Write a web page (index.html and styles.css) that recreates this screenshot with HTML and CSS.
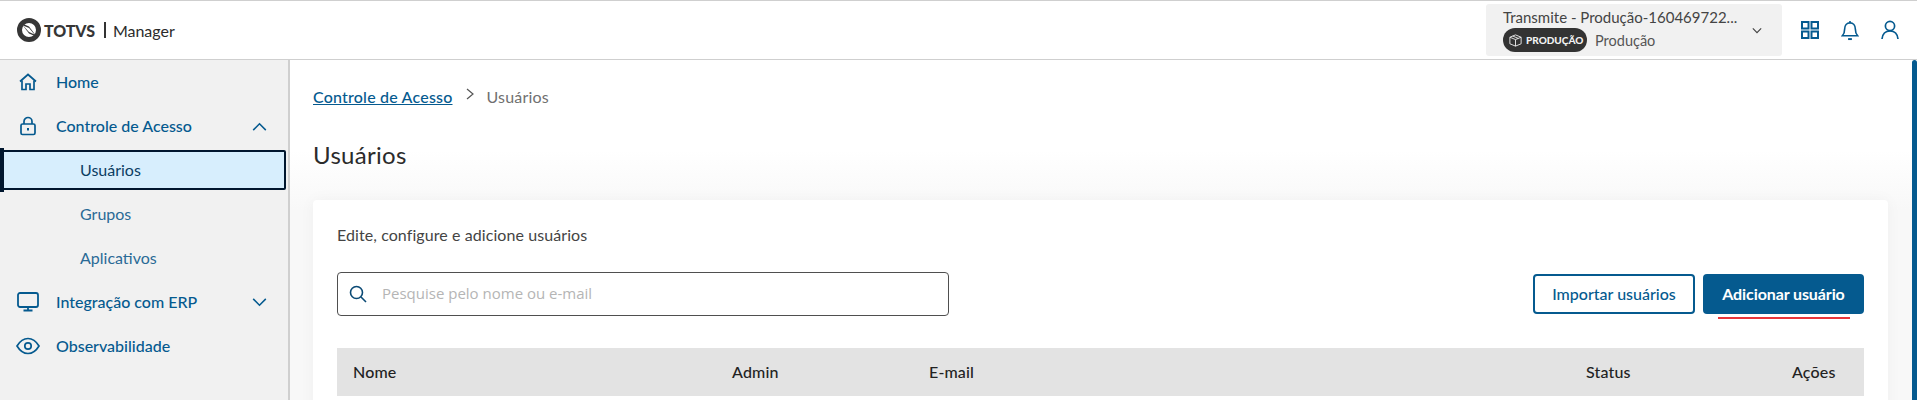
FILE: index.html
```html
<!DOCTYPE html>
<html lang="pt-BR">
<head>
<meta charset="utf-8">
<title>TOTVS Manager</title>
<link rel="stylesheet" href="styles.css">
</head>
<body>
<header class="topbar">
  <div class="brand">
    <svg class="brand-mark" viewBox="0 0 24 24" width="24" height="24"><circle cx="12" cy="12" r="9.5" fill="none" stroke="#363636" stroke-width="5"/><path d="M4 5 L12 8.5 L20 19 L12 15.5 Z" fill="#363636"/><path d="M6 7.5 L12 10 L17.5 16.5 L12 14 Z" fill="#fff"/></svg>
    <span class="brand-name">TOTVS</span>
    <span class="brand-sep"></span>
    <span class="brand-app">Manager</span>
  </div>
  <div class="topbar-right">
    <div class="env">
      <div class="env-text">
        <div class="env-title">Transmite - Produção-160469722...</div>
        <div class="env-sub">
          <span class="chip">
            <svg viewBox="0 0 16 16" width="15" height="15" fill="none" stroke="#e8e8e8" stroke-width="1"><path d="M8 2 L14 4.5 V11.5 L8 14 L2 11.5 V4.5 Z M2 4.5 L8 7 L14 4.5 M8 7 V14 M5 3.2 L11 5.8"/></svg>
            PRODUÇÃO
          </span>
          <span class="env-name">Produção</span>
        </div>
      </div>
      <svg class="env-chev" viewBox="0 0 12 8" width="10" height="7" fill="none" stroke="#444" stroke-width="1.4"><path d="M1 1.5 L6 6.5 L11 1.5"/></svg>
    </div>
    <div class="top-icons">
      <svg viewBox="0 0 18 18" width="18" height="18" fill="none" stroke="#055a8f" stroke-width="2"><rect x="1" y="1" width="6.5" height="6.5"/><rect x="10.5" y="1" width="6.5" height="6.5"/><rect x="1" y="10.5" width="6.5" height="6.5"/><rect x="10.5" y="10.5" width="6.5" height="6.5"/></svg>
      <svg viewBox="0 0 18 22" width="18" height="21" fill="none" stroke="#055a8f" stroke-width="1.7"><path d="M1 16.5 H17 C15 14.5 14.6 13 14.6 9.5 C14.6 5.8 12.2 3 9 3 C5.8 3 3.4 5.8 3.4 9.5 C3.4 13 3 14.5 1 16.5 Z"/><path d="M9 1 V3"/><path d="M7 20 H11" stroke-width="2"/></svg>
      <svg viewBox="0 0 18 20" width="18" height="20" fill="none" stroke="#055a8f" stroke-width="1.7"><circle cx="9" cy="6" r="4.6"/><path d="M1 19 C1.5 14 4.5 11 9 11 C13.5 11 16.5 14 17 19"/></svg>
    </div>
  </div>
</header>
<div class="shell">
  <nav class="sidebar">
    <a class="nav-item">
      <span class="nav-icon"><svg viewBox="0 0 20 20" width="20" height="20" fill="none" stroke="#055a8f" stroke-width="1.7"><path d="M2 9.5 L10 2.5 L18 9.5"/><path d="M4 8.5 V17.5 H8 V12 H12 V17.5 H16 V8.5"/></svg></span>
      <span class="nav-label">Home</span>
    </a>
    <a class="nav-item">
      <span class="nav-icon"><svg viewBox="0 0 20 20" width="20" height="20" fill="none" stroke="#055a8f" stroke-width="1.7"><rect x="3" y="8" width="14" height="10.5" rx="1.5"/><path d="M6 8 V5.5 C6 3 8 1.5 10 1.5 C12 1.5 14 3 14 5.5 V8"/><path d="M10 12 V14.5" stroke-width="2"/></svg></span>
      <span class="nav-label">Controle de Acesso</span>
      <svg class="nav-chev" viewBox="0 0 16 10" width="15" height="9" fill="none" stroke="#055a8f" stroke-width="1.7"><path d="M1 9 L8 2 L15 9"/></svg>
    </a>
    <a class="nav-sub nav-sub-active">Usuários</a>
    <a class="nav-sub">Grupos</a>
    <a class="nav-sub">Aplicativos</a>
    <a class="nav-item">
      <span class="nav-icon"><svg viewBox="0 0 22 20" width="22" height="20" fill="none" stroke="#055a8f" stroke-width="1.8"><rect x="1" y="1" width="20" height="14" rx="2"/><path d="M11 15 V18.5 M6.5 18.5 H15.5"/></svg></span>
      <span class="nav-label">Integração com ERP</span>
      <svg class="nav-chev" viewBox="0 0 16 10" width="15" height="9" fill="none" stroke="#055a8f" stroke-width="1.7"><path d="M1 1 L8 8 L15 1"/></svg>
    </a>
    <a class="nav-item">
      <span class="nav-icon"><svg viewBox="0 0 24 18" width="24" height="18" fill="none" stroke="#055a8f" stroke-width="1.7"><path d="M1 9 C4 4 8 1.5 12 1.5 C16 1.5 20 4 23 9 C20 14 16 16.5 12 16.5 C8 16.5 4 14 1 9 Z"/><circle cx="12" cy="9" r="3.2"/></svg></span>
      <span class="nav-label">Observabilidade</span>
    </a>
  </nav>
  <main class="content">
    <div class="breadcrumb">
      <a class="crumb-link">Controle de Acesso</a>
      <svg class="crumb-chev" viewBox="0 0 8 12" width="8" height="12" fill="none" stroke="#555" stroke-width="1.2"><path d="M1 1 L7 6 L1 11"/></svg>
      <span class="crumb-current">Usuários</span>
    </div>
    <h1 class="page-title">Usuários</h1>
    <section class="card">
      <p class="card-desc">Edite, configure e adicione usuários</p>
      <div class="toolbar">
        <label class="search">
          <svg viewBox="0 0 18 18" width="18" height="18" fill="none" stroke="#0b4a75" stroke-width="1.6"><circle cx="7.5" cy="7.5" r="6"/><path d="M12 12 L17 17"/></svg>
          <span class="search-ph">Pesquise pelo nome ou e-mail</span>
        </label>
        <div class="actions">
          <button class="btn btn-outline">Importar usuários</button>
          <button class="btn btn-solid">Adicionar usuário<span class="red-mark"></span></button>
        </div>
      </div>
      <div class="table-head">
        <span>Nome</span>
        <span>Admin</span>
        <span>E-mail</span>
        <span>Status</span>
        <span>Ações</span>
      </div>
    </section>
  </main>
  <div class="scroll-thumb"></div>
</div>
</body>
</html>
```
FILE: styles.css
```css
* { box-sizing: border-box; }
html, body { margin: 0; height: 100%; overflow: hidden; }
body {
  display: flex;
  flex-direction: column;
  height: 400px;
  font-family: "Lato", "Noto Sans", sans-serif;
  background: #fff;
  color: #222;
  font-size: 16px;
}
.topbar {
  flex: 0 0 60px;
  display: flex;
  justify-content: space-between;
  align-items: center;
  border-top: 1px solid #cfcfcf;
  border-bottom: 1px solid #cfcfcf;
  background: #fff;
  padding: 0 18px 0 17px;
}
.brand { display: flex; align-items: center; }
.brand-mark { margin-right: 3px; }
.brand-name { font-weight: 900; font-size: 16px; color: #363636; letter-spacing: -.1px; }
.brand-sep { width: 2px; height: 16px; background: #333; margin: 0 7px 0 9px; }
.brand-app { font-size: 16px; color: #2b2b2b; }
.topbar-right { display: flex; align-items: center; }
.env {
  width: 296px;
  height: 52px;
  background: #f1f1f1;
  border-radius: 3px;
  padding: 0 20px 0 17px;
  display: flex;
  justify-content: space-between;
  align-items: center;
  margin-right: 19px;
}
.env-title { font-size: 15px; color: #444; line-height: 18px; white-space: nowrap; }
.env-sub { display: flex; align-items: center; margin-top: 2px; }
.chip {
  width: 84px;
  height: 24px;
  border-radius: 12px;
  background: #333;
  color: #f2f2f2;
  display: flex;
  align-items: center;
  gap: 3px;
  padding-left: 5px;
  font-size: 10px;
  font-weight: 900;
  white-space: nowrap;
}
.env-name { margin-left: 8px; color: #555; font-size: 14.5px; }
.env-chev { flex: none; }
.top-icons { display: flex; align-items: center; gap: 22px; }
.shell { flex: 1; display: flex; min-height: 0; position: relative; }
.sidebar {
  flex: 0 0 290px;
  background: #f1f1f1;
  border-right: 2px solid #cfcfcf;
}
.nav-item {
  height: 44px;
  display: flex;
  align-items: center;
  color: #055a8f;
  font-size: 16px;
  font-weight: 500;
  position: relative;
}
.nav-icon { width: 56px; display: flex; justify-content: center; padding-right: 1px; flex: none; }
.nav-label { padding-bottom: 2px; }
.nav-chev { position: absolute; left: 252px; top: 18px; }
.nav-sub {
  height: 44px;
  display: flex;
  align-items: center;
  padding-left: 80px;
  padding-bottom: 2px;
  font-size: 16px;
  color: #2a6a96;
}
.nav-sub-active {
  height: 40px;
  margin: 2px 2px 2px 0;
  background: #d7eefd;
  border: 2px solid #00162e;
  color: #0b3d63;
  position: relative;
  border-radius: 2px;
  padding-left: 78px;
}
.nav-sub-active::before {
  content: "";
  position: absolute;
  left: -2px;
  top: -4px;
  bottom: -4px;
  width: 4px;
  background: #00162e;
}
.content {
  flex: 1;
  min-width: 0;
  padding: 0 29px 0 23px;
  background: linear-gradient(#fff 90px, #f8f8f8 150px);
}
.breadcrumb { display: flex; align-items: center; height: 20px; margin-top: 26px; gap: 13px; font-size: 16px; }
.crumb-link { color: #055a8f; text-decoration: underline; font-weight: 500; letter-spacing: .2px; }
.crumb-chev { position: relative; top: -2px; }
.crumb-current { color: #707070; letter-spacing: .2px; }
.page-title { margin: 33px 0 0; font-size: 24px; font-weight: 400; line-height: 32px; color: #2b2b2b; letter-spacing: .3px; }
.card {
  margin-top: 29px;
  background: #fff;
  border-radius: 4px;
  padding: 24px 24px 0;
  box-shadow: 0 0 16px rgba(0,0,0,.04);
  height: 260px;
}
.card-desc { margin: 0; font-size: 16px; line-height: 22px; color: #444; letter-spacing: .08px; }
.toolbar { display: flex; justify-content: space-between; align-items: center; margin-top: 26px; }
.search {
  width: 612px;
  height: 44px;
  border: 1px solid #4f4f4f;
  border-radius: 4px;
  display: flex;
  align-items: center;
  padding-left: 11px;
  gap: 15px;
}
.search-ph { color: #b5b5b5; font-family: "Open Sans", sans-serif; font-size: 15px; padding-bottom: 2px; }
.actions { display: flex; gap: 8px; }
.btn {
  width: 161px;
  height: 40px;
  border-radius: 4px;
  font-family: inherit;
  font-size: 16px;
  padding: 0 0 2px;
  position: relative;
}
.btn-outline { width: 162px; background: #fff; border: 2px solid #055a8f; color: #055a8f; font-weight: 500; }
.btn-solid { background: #055a8f; border: 0; color: #fff; font-weight: 700; letter-spacing: -.1px; }
.red-mark {
  position: absolute;
  left: 15px;
  right: 14px;
  top: 43px;
  height: 2px;
  background: #e8353a;
}
.table-head {
  margin-top: 32px;
  height: 48px;
  background: #e3e3e3;
  display: grid;
  grid-template-columns: 379px 197px 657px 206px 1fr;
  align-items: center;
  padding-left: 16px;
  padding-bottom: 2px;
  font-size: 16px;
  font-weight: 500;
  color: #222;
  letter-spacing: .15px;
}
.scroll-thumb {
  position: absolute;
  top: 0;
  right: 0;
  bottom: 0;
  width: 5px;
  background: #055a8f;
  border-radius: 3px 3px 0 0;
}
```
